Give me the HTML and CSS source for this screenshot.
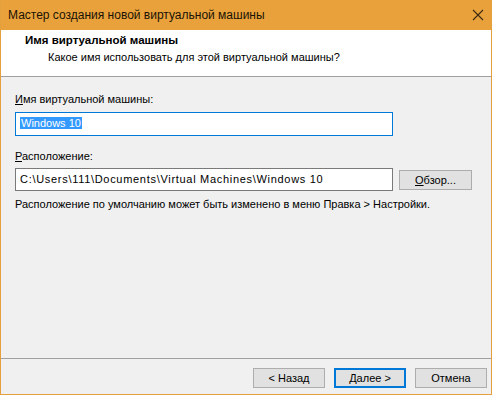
FILE: index.html
```html
<!DOCTYPE html>
<html lang="ru">
<head>
  <meta charset="UTF-8" />
  <title>Мастер создания новой виртуальной машины</title>
  <link rel="stylesheet" href="styles.css">
</head>
<body>

  <div class="window">
    <div class="titlebar">
      <span class="title">Мастер создания новой виртуальной машины</span>
      <svg class="close" width="12" height="12" viewBox="0 0 12 12">
        <path d="M1 1 L11 11 M11 1 L1 11" stroke="#3a2a10" stroke-width="1.1" fill="none"/>
      </svg>
    </div>

    <div class="header">
      <div class="head-title">Имя виртуальной машины</div>
      <div class="head-sub">Какое имя использовать для этой виртуальной машины?</div>
    </div>

    <div class="content">
      <div class="label"><u>И</u>мя виртуальной машины:</div>
      <div class="field focused"><span class="selected">Windows 10</span></div>

      <div class="label second"><u>Р</u>асположение:</div>
      <div class="row">
        <div class="field path">C:\Users\111\Documents\Virtual Machines\Windows 10</div>
        <div class="btn browse"><u>О</u>бзор...</div>
      </div>
      <div class="note">Расположение по умолчанию может быть изменено в меню Правка &gt; Настройки.</div>
    </div>

    <div class="footer">
      <div class="btn">&lt; Назад</div>
      <div class="btn default">Далее &gt;</div>
      <div class="btn">Отмена</div>
    </div>
  </div>

</body>
</html>
```

FILE: styles.css
```css
body {
  margin: 0;
  background: #fff;
  font-family: 'Liberation Sans', 'Noto Sans', sans-serif;
  font-size: 11px;
  color: #000;
}
.window {
  width: 490px;
  height: 394px;
  border: 1px solid #e3a03c;
  border-top: none;
  background: #f0f0f0;
  display: flex;
  flex-direction: column;
}
.titlebar {
  height: 30px;
  background: #e9a23b;
  display: flex;
  align-items: center;
  justify-content: space-between;
  padding: 0 7px 0 7px;
}
.title {
  font-size: 12px;
  color: #1a1206;
}
.header {
  height: 47px;
  background: #fff;
  border-bottom: 1px solid #a0a0a0;
  padding: 2px 0 0 24px;
  box-sizing: border-box;
}
.head-title {
  font-weight: bold;
  font-size: 11.5px;
  line-height: 17px;
}
.head-sub {
  padding-left: 23px;
  line-height: 17px;
}
.content {
  flex: 1;
  padding: 14px 0 0 14px;
}
.label {
  line-height: 16px;
}
.label.second {
  margin-top: 12px;
}
.field {
  width: 378px;
  height: 23px;
  box-sizing: border-box;
  border: 1px solid #7a7a7a;
  background: #fff;
  margin-top: 4px;
  padding: 3px 4px;
  line-height: 15px;
  white-space: nowrap;
  overflow: hidden;
}
.field.focused {
  height: 24px;
  margin-top: 5px;
  border-color: #0078d7;
}
.field.path {
  letter-spacing: 0.7px;
}
.selected {
  background: #3399ff;
  color: #fff;
  padding: 0 1px;
}
.row {
  display: flex;
  align-items: flex-start;
  gap: 6px;
}
.btn {
  width: 72px;
  height: 20px;
  box-sizing: border-box;
  border: 1px solid #adadad;
  background: #e1e1e1;
  display: flex;
  align-items: center;
  justify-content: center;
}
.browse {
  width: 73px;
  margin-top: 6px;
}
.note {
  margin-top: 5px;
  line-height: 16px;
}
.footer {
  border-top: 1px solid #a0a0a0;
  height: 36px;
  box-sizing: border-box;
  display: flex;
  justify-content: flex-end;
  gap: 9px;
  padding: 9px 4px 0 0;
}
.btn.default {
  border: 2px solid #0078d7;
}
```
